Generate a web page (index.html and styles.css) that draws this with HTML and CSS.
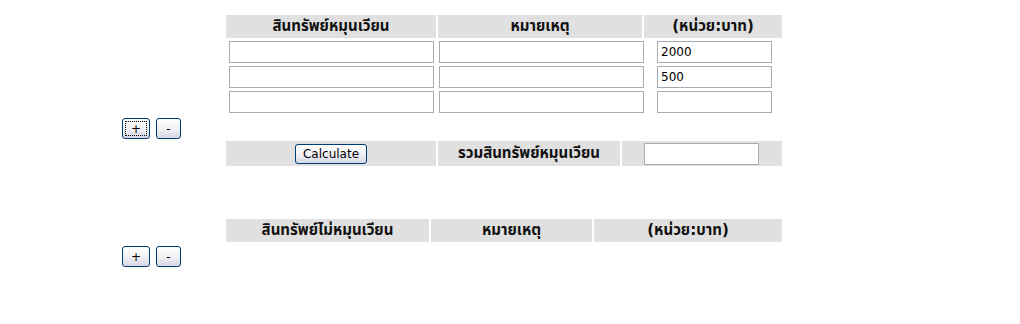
FILE: index.html
```html
<!DOCTYPE html>
<html lang="th">
<head>
    <meta charset="UTF-8">
    <title>งบดุล</title>
    <link rel="stylesheet" href="styles.css">
</head>
<body>
    <div class="page">
        <div class="grid current">
            <div class="head">สินทรัพย์หมุนเวียน</div>
            <div class="head">หมายเหตุ</div>
            <div class="head">(หน่วย:บาท)</div>

            <div class="cell"><input class="txt wide" type="text"></div>
            <div class="cell"><input class="txt wide note" type="text"></div>
            <div class="cell"><input class="txt amount" type="text" value="2000"></div>

            <div class="cell"><input class="txt wide" type="text"></div>
            <div class="cell"><input class="txt wide note" type="text"></div>
            <div class="cell"><input class="txt amount" type="text" value="500"></div>

            <div class="cell"><input class="txt wide" type="text"></div>
            <div class="cell"><input class="txt wide note" type="text"></div>
            <div class="cell"><input class="txt amount" type="text"></div>
        </div>

        <div class="btn-row first">
            <button class="xp-btn plus focused">+</button>
            <button class="xp-btn minus">-</button>
        </div>

        <div class="grid total">
            <div class="head center"><button class="xp-btn calc">Calculate</button></div>
            <div class="head">รวมสินทรัพย์หมุนเวียน</div>
            <div class="head total-box"><input class="txt sum" type="text"></div>
        </div>

        <div class="grid fixed">
            <div class="head">สินทรัพย์ไม่หมุนเวียน</div>
            <div class="head">หมายเหตุ</div>
            <div class="head">(หน่วย:บาท)</div>
        </div>

        <div class="btn-row second">
            <button class="xp-btn plus">+</button>
            <button class="xp-btn minus">-</button>
        </div>
    </div>
</body>
</html>
```

FILE: styles.css
```css
body {
    margin: 0;
    padding: 0;
    background: white;
    font-family: "DejaVu Sans", "Noto Sans Thai", "Noto Sans", sans-serif;
    color: #000;
}

.page {
    padding-top: 15px;
}

.grid {
    display: grid;
    margin-left: 226px;
    width: 556px;
    column-gap: 2px;
    row-gap: 2px;
}

.current {
    grid-template-columns: 210px 204px 138px;
    grid-auto-rows: 23px;
}

.total {
    grid-template-columns: 210px 182px 160px;
    grid-auto-rows: 25px;
    margin-top: 2px;
}

.fixed {
    grid-template-columns: 203px 161px 188px;
    grid-auto-rows: 23px;
    margin-top: 53px;
}

.head {
    background: #e0e0e0;
    font-weight: bold;
    font-size: 15px;
    text-align: center;
    display: flex;
    justify-content: center;
    align-items: center;
    white-space: nowrap;
    color: #111;
}

.cell {
    position: relative;
}

.txt {
    box-sizing: border-box;
    height: 22px;
    margin: 1px 0 0 0;
    padding: 0 3px;
    border: 1px solid #a5acb2;
    font-family: "DejaVu Sans", sans-serif;
    font-size: 12px;
    color: #000;
    background: white;
    outline: none;
}

.wide {
    width: 205px;
    margin-left: 3px;
}

.note {
    margin-left: 1px;
}

.amount {
    width: 115px;
    margin-left: 13px;
}

.total-box {
    justify-content: flex-start;
}

.sum {
    width: 115px;
    height: 22px;
    margin: 0 0 0 22px;
}

.btn-row {
    display: flex;
    gap: 6px;
    margin-left: 122px;
}

.btn-row.first {
    margin-top: 5px;
    height: 21px;
}

.btn-row.second {
    margin-top: 4px;
}

.xp-btn {
    box-sizing: border-box;
    height: 21px;
    padding: 0;
    border: 1px solid #003c74;
    border-radius: 3px;
    background: linear-gradient(#ffffff 0%, #f2f2f5 50%, #d6d6e4 100%);
    font-family: "DejaVu Sans", sans-serif;
    font-size: 12px;
    font-weight: normal;
    color: #000;
    cursor: pointer;
}

.plus {
    width: 28px;
}

.minus {
    width: 25px;
}

.focused {
    outline: 1px dotted #000;
    outline-offset: -4px;
}

.calc {
    width: 72px;
    height: 20px;
}
```
